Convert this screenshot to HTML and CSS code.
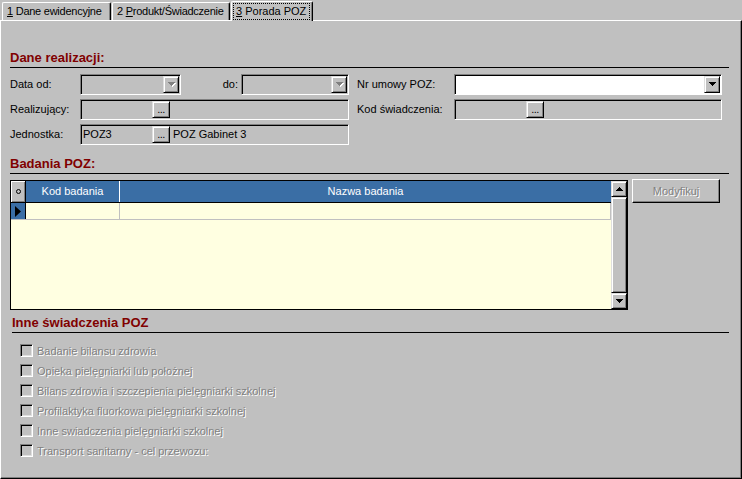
FILE: index.html
```html
<!DOCTYPE html>
<html lang="pl">
<head>
<meta charset="utf-8">
<title>Porada POZ</title>
<link rel="stylesheet" href="styles.css">
</head>
<body>
<div class="tabs">
  <div class="tab t1"><u>1</u> Dane ewidencyjne</div>
  <div class="tab t2">2 <u>P</u>rodukt/Świadczenie</div>
  <div class="tab t3"><span class="focus"><u>3</u> Porada POZ</span></div>
</div>
<div class="panel">
  <div class="sec-title s1">Dane realizacji:</div>
  <div class="form">
    <div class="col-left">
      <div class="row">
        <span class="lbl">Data od:</span>
        <div class="field w101">
          <div class="btn3d drop"><svg class="arr" width="8" height="5" viewBox="0 0 8 5"><path class="sh" d="M1 1h7v1h-1v1h-1v1h-1v1h-1v-1h-1v-1h-1v-1h-1z"/><path class="fg dis" d="M0 0h7v1h-1v1h-1v1h-1v1h-1v-1h-1v-1h-1v-1h-1z"/></svg></div>
        </div>
        <span class="lbl-do">do:</span>
        <div class="field w108">
          <div class="btn3d drop"><svg class="arr" width="8" height="5" viewBox="0 0 8 5"><path class="sh" d="M1 1h7v1h-1v1h-1v1h-1v1h-1v-1h-1v-1h-1v-1h-1z"/><path class="fg dis" d="M0 0h7v1h-1v1h-1v1h-1v1h-1v-1h-1v-1h-1v-1h-1z"/></svg></div>
        </div>
      </div>
      <div class="row">
        <span class="lbl">Realizujący:</span>
        <div class="field w269">
          <div class="fpart p1"></div>
          <div class="btn3d ell">...</div>
          <div class="fpart"></div>
        </div>
      </div>
      <div class="row">
        <span class="lbl">Jednostka:</span>
        <div class="field w269">
          <div class="fpart p1">POZ3</div>
          <div class="btn3d ell">...</div>
          <div class="fpart">POZ Gabinet 3</div>
        </div>
      </div>
    </div>
    <div class="col-right">
      <div class="row">
        <span class="lbl lbl-r">Nr umowy POZ:</span>
        <div class="field w268 white">
          <div class="btn3d drop"><svg class="arr" width="8" height="5" viewBox="0 0 8 5"><path class="fg" d="M0 0h7v1h-1v1h-1v1h-1v1h-1v-1h-1v-1h-1v-1h-1z"/></svg></div>
        </div>
      </div>
      <div class="row">
        <span class="lbl lbl-r">Kod świadczenia:</span>
        <div class="field w268">
          <div class="fpart p1"></div>
          <div class="btn3d ell">...</div>
          <div class="fpart"></div>
        </div>
      </div>
    </div>
  </div>

  <div class="sec-title s2">Badania POZ:</div>
  <div class="grid-area">
    <div class="grid">
      <div class="grid-main">
        <div class="ghead">
          <div class="gh-ind"><span class="ring"></span></div>
          <div class="gh-kod">Kod badania</div>
          <div class="gh-naz">Nazwa badania</div>
        </div>
        <div class="grow">
          <div class="gr-ind"><svg width="6" height="11" viewBox="0 0 6 11"><path d="M0 0L6 5.5L0 11z" fill="#000"/></svg></div>
          <div class="gr-kod"></div>
          <div class="gr-naz"></div>
        </div>
      </div>
      <div class="vscroll">
        <div class="btn3d sb-btn"><svg width="7" height="4" viewBox="0 0 7 4"><path d="M3 0h1v1h1v1h1v1h1v1h-7v-1h1v-1h1v-1h1z" fill="#000"/></svg></div>
        <div class="btn3d sb-thumb"></div>
        <div class="btn3d sb-btn"><svg width="7" height="4" viewBox="0 0 7 4"><path d="M0 0h7v1h-1v1h-1v1h-1v1h-1v-1h-1v-1h-1v-1h-1z" fill="#000"/></svg></div>
      </div>
    </div>
    <div class="btn-mod"><span class="dis-text">Modyfikuj</span></div>
  </div>

  <div class="sec-title s3">Inne świadczenia POZ</div>
  <div class="checks">
    <div class="chk"><span class="box"></span><span class="dis-text">Badanie bilansu zdrowia</span></div>
    <div class="chk"><span class="box"></span><span class="dis-text">Opieka pielęgniarki lub położnej</span></div>
    <div class="chk"><span class="box"></span><span class="dis-text">Bilans zdrowia i szczepienia pielęgniarki szkolnej</span></div>
    <div class="chk"><span class="box"></span><span class="dis-text">Profilaktyka fluorkowa pielęgniarki szkolnej</span></div>
    <div class="chk"><span class="box"></span><span class="dis-text">Inne swiadczenia pielęgniarki szkolnej</span></div>
    <div class="chk"><span class="box"></span><span class="dis-text">Transport sanitarny - cel przewozu:</span></div>
  </div>
</div>
</body>
</html>
```

FILE: styles.css
```css
* { box-sizing: border-box; margin: 0; padding: 0; }
html, body { width: 742px; height: 479px; overflow: hidden; }
body {
  background: #c0c0c0;
  font-family: "Liberation Sans", Arial, sans-serif;
  font-size: 11px;
  color: #000;
}

/* Tabs */
.tabs {
  display: flex;
  align-items: flex-end;
  height: 20px;
  padding-left: 2px;
  position: relative;
  z-index: 1;
}
.tab {
  height: 18px;
  border-top: 1px solid #fff;
  border-left: 1px solid #fff;
  border-right: 1px solid #000;
  box-shadow: inset -1px 0 #808080;
  border-radius: 2px 2px 0 0;
  padding: 2px 0 0 4px;
  line-height: 13px;
  white-space: nowrap;
  letter-spacing: -0.25px;
}
.t1 { width: 109px; }
.t2 { width: 118px; margin-left: 1px; }
.t3 {
  width: 82px;
  height: 20px;
  margin-left: 1px;
  margin-bottom: -1px;
  background: #c0c0c0;
  padding: 1px 0 0 1px;
  letter-spacing: 0;
}
.focus {
  display: inline-block;
  border: 1px dotted #000;
  padding: 1px 3px 1px 2px;
  line-height: 13px;
}

/* Panel */
.panel {
  height: 459px;
  border: 1px solid;
  border-color: #fff #000 #000 #fff;
  box-shadow: inset -1px -1px #808080;
  padding: 0 9px;
}

.sec-title {
  color: #800000;
  font-weight: bold;
  font-size: 13px;
  line-height: 18px;
  height: 19px;
  border-bottom: 1px solid #000;
  width: 719px;
}
.s1 { margin-top: 28px; }
.s2 { margin-top: 6px; }
.s3 { margin-top: 4px; margin-left: 2px; width: 717px; }

/* Form */
.form { display: flex; gap: 8px; margin-top: 6px; }
.col-left { width: 339px; }
.col-right { width: 365px; }
.row {
  display: flex;
  align-items: center;
  height: 21px;
  margin-bottom: 4px;
}
.lbl { width: 70px; line-height: 21px; white-space: nowrap; }
.lbl-r { width: 97px; }
.lbl-do { width: 60px; text-align: right; padding-right: 3px; line-height: 21px; }

.field {
  height: 21px;
  display: flex;
  border: 1px solid;
  border-color: #808080 #fff #fff #808080;
  box-shadow: inset 1px 1px #000;
  padding: 1px;
  background: #c0c0c0;
}
.field.white { background: #fff; }
.w101 { width: 101px; }
.w108 { width: 108px; }
.w269 { width: 269px; }
.w268 { width: 268px; }

.fpart { line-height: 17px; padding-left: 1px; white-space: nowrap; flex: 1; }
.fpart.p1 { width: 70px; flex: none; }
.fpart + .btn3d + .fpart { padding-left: 3px; }

.btn3d {
  background: #c0c0c0;
  border: 1px solid;
  border-color: #dfdfdf #000 #000 #dfdfdf;
  box-shadow: inset 1px 1px #fff, inset -1px -1px #808080;
}
.drop {
  width: 16px;
  height: 17px;
  margin-left: auto;
  display: flex;
  align-items: center;
  justify-content: center;
}
.arr { display: block; margin-left: 1px; }
.arr .fg { fill: #000; }
.arr .fg.dis { fill: #808080; }
.arr .sh { fill: #fff; }
.ell {
  width: 18px;
  height: 17px;
  text-align: center;
  line-height: 14px;
  font-size: 11px;
  letter-spacing: -0.5px;
}

/* Grid */
.grid-area { display: flex; margin-top: 6px; }
.grid {
  width: 618px;
  height: 130px;
  border: 1px solid #000;
  display: flex;
  background: #ffffe1;
}
.grid-main { width: 600px; }
.ghead {
  display: flex;
  height: 22px;
  border-bottom: 1px solid #000;
  background: #3a6ea5;
  color: #fff;
  line-height: 21px;
}
.gh-ind {
  width: 15px;
  background: #c0c0c0;
  border-right: 1px solid #000;
  box-shadow: inset 1px 1px #fff, inset -1px -1px #808080;
  display: flex;
  align-items: center;
  justify-content: center;
}
.ring {
  width: 5px;
  height: 5px;
  border: 1px solid #000;
  border-radius: 50%;
}
.gh-kod { width: 94px; text-align: center; border-right: 1px solid #fff; }
.gh-naz { flex: 1; text-align: center; }

.grow {
  display: flex;
  height: 17px;
  border-bottom: 1px solid #c0c0c0;
  border-right: 1px solid #c0c0c0;
}
.gr-ind {
  width: 15px;
  background: #3a6ea5;
  border-right: 1px solid #000;
  padding: 3px 0 0 4px;
}
.gr-ind svg { display: block; }
.gr-kod { width: 94px; border-right: 1px solid #c0c0c0; }
.gr-naz { flex: 1; }

.vscroll {
  width: 16px;
  display: flex;
  flex-direction: column;
}
.sb-btn {
  height: 16px;
  display: flex;
  align-items: center;
  justify-content: center;
}
.sb-btn svg { display: block; }
.sb-thumb { flex: 1; }

.btn-mod {
  width: 88px;
  height: 24px;
  margin-left: 4px;
  margin-top: -1px;
  border: 1px solid;
  border-color: #fff #000 #000 #fff;
  box-shadow: inset -1px -1px #808080;
  text-align: center;
  line-height: 22px;
}
.dis-text { color: #808080; text-shadow: 1px 1px 0 #fff; white-space: nowrap; }

/* Checkboxes */
.checks { margin-top: 8px; }
.chk {
  display: flex;
  align-items: flex-start;
  height: 20px;
  padding-left: 10px;
  line-height: 20px;
}
.box {
  width: 13px;
  height: 13px;
  margin-top: 3px;
  margin-right: 4px;
  border: 1px solid;
  border-color: #808080 #fff #fff #808080;
  box-shadow: inset 1px 1px #000, inset -1px -1px #dfdfdf;
  background: #c0c0c0;
}
```
